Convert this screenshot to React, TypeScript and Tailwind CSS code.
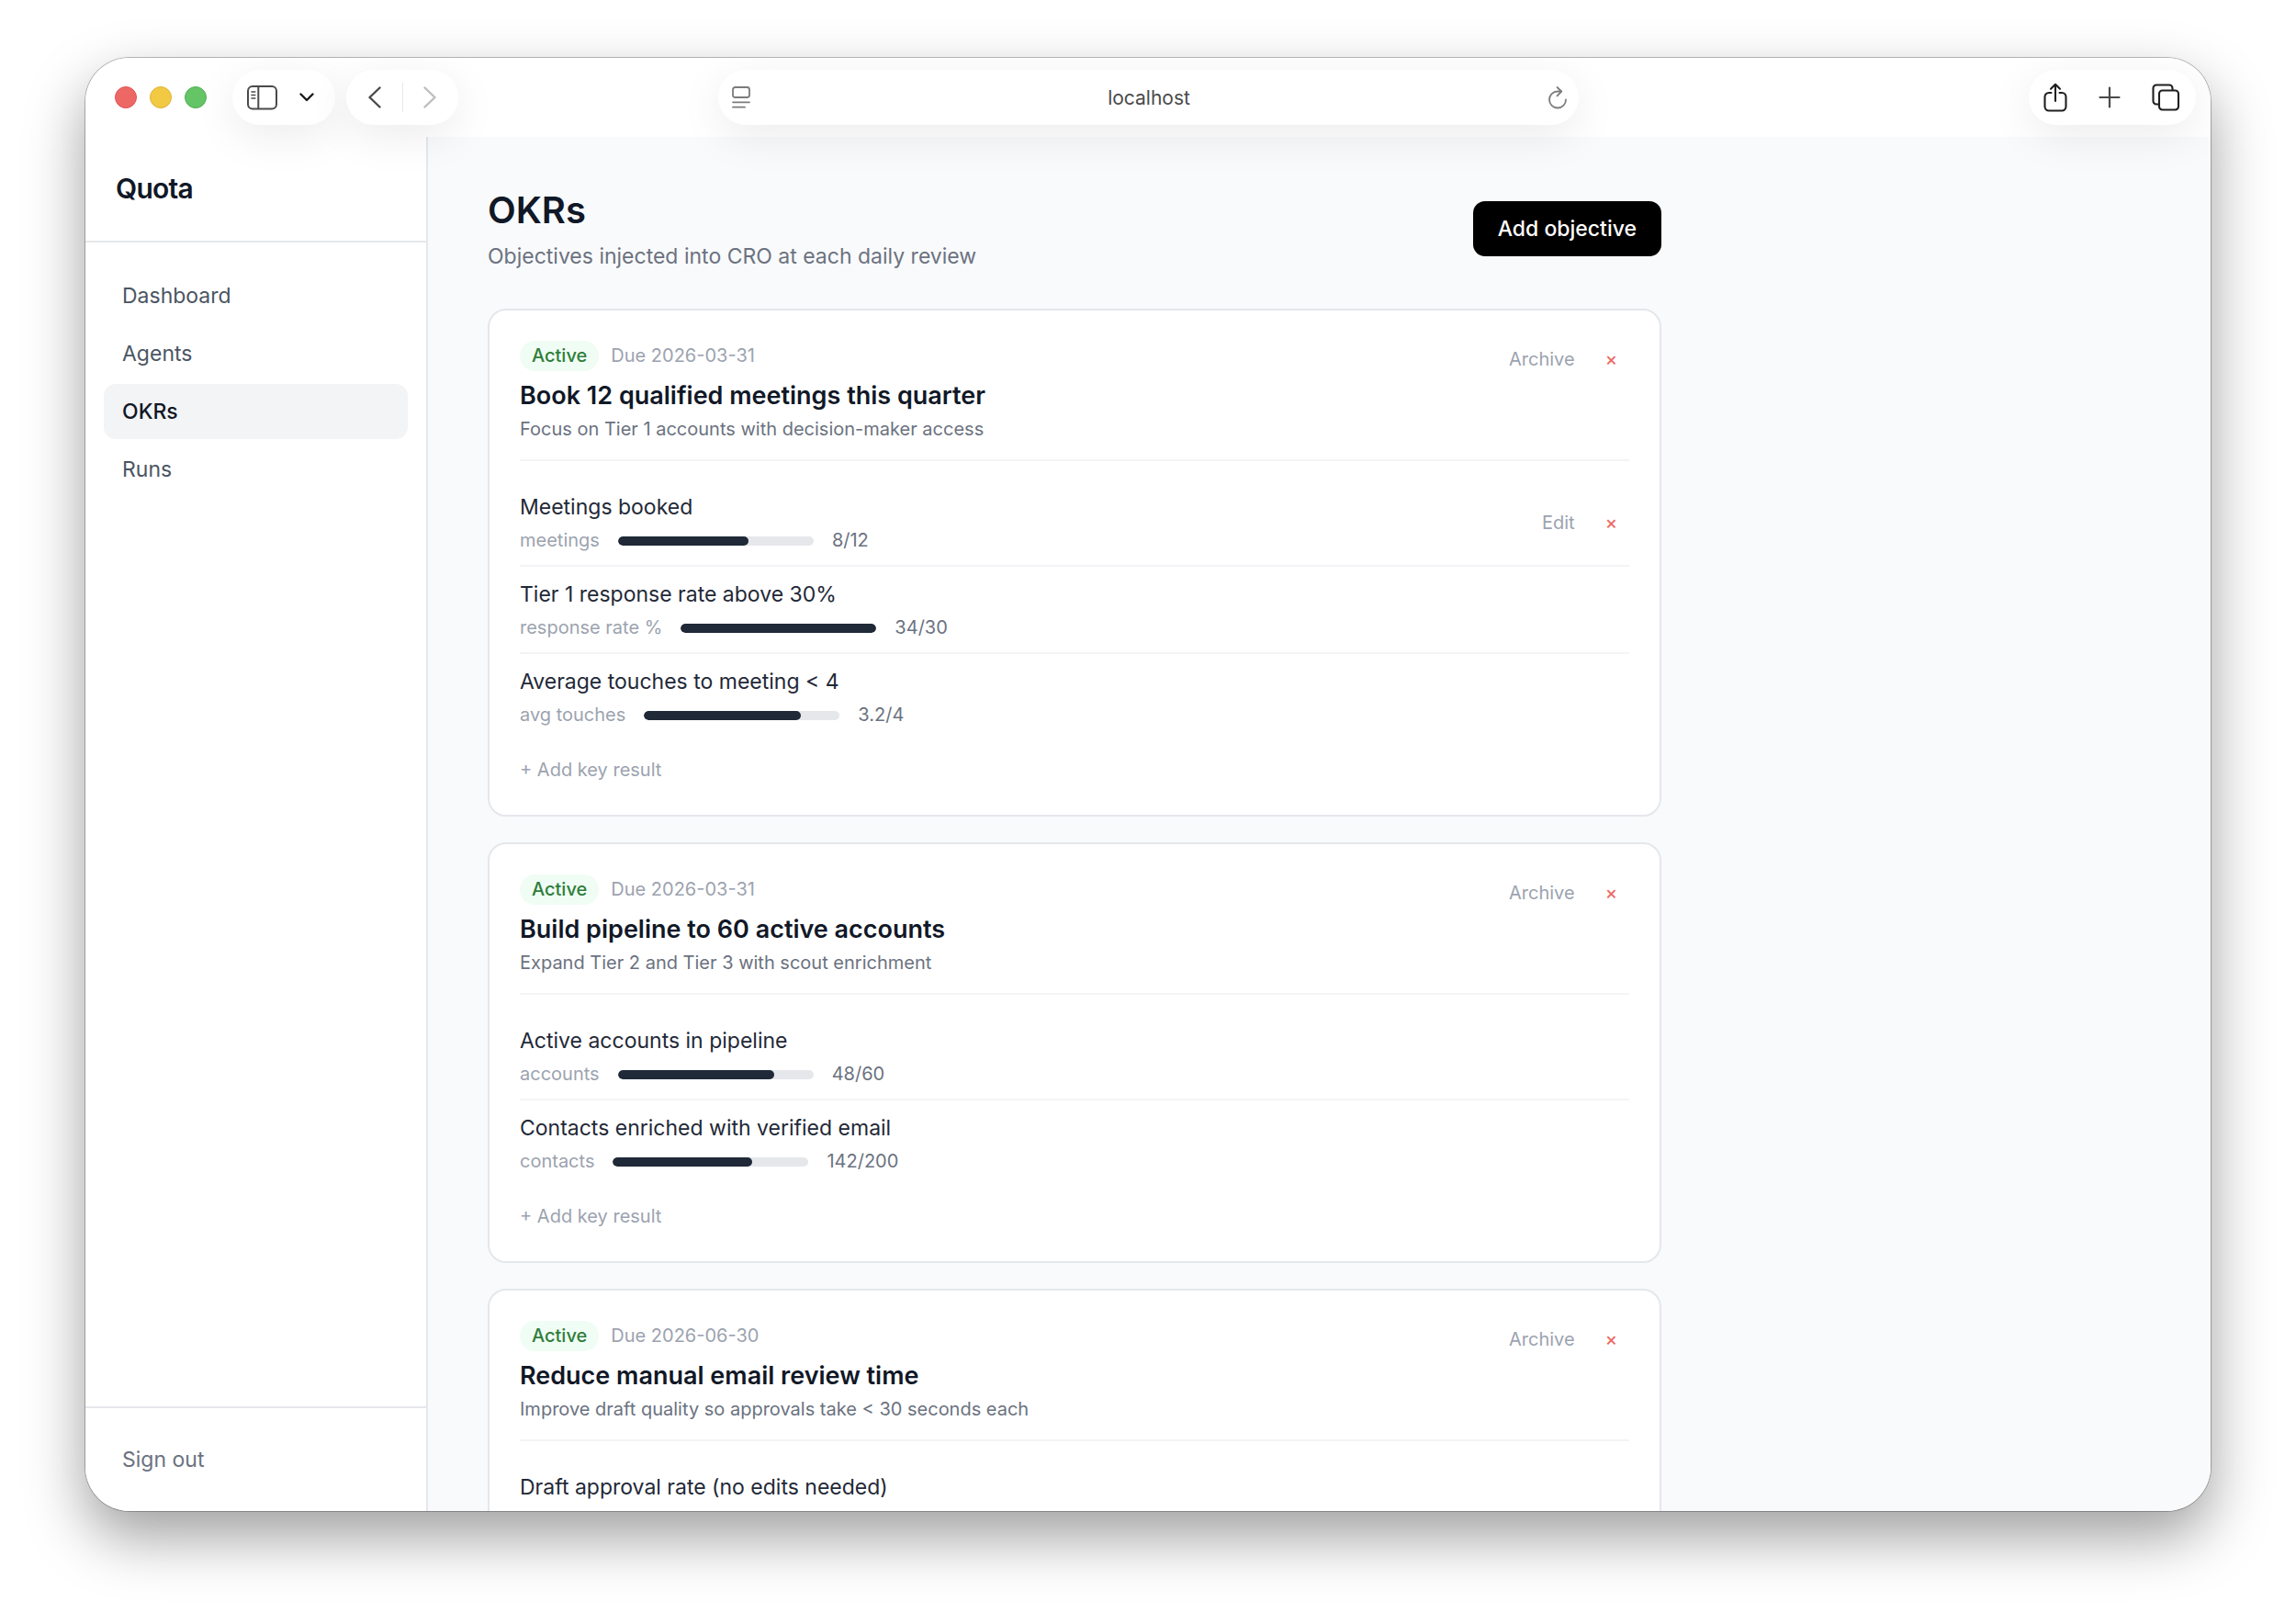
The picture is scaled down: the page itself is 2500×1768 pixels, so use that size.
import { useState } from "react";

interface KeyResult {
  title: string;
  unit: string;
  current: number;
  target: number;
  editable?: boolean;
}

interface Objective {
  title: string;
  description: string;
  due: string;
  keyResults: KeyResult[];
}

const navItems = ["Dashboard", "Agents", "OKRs", "Runs"];

const objectives: Objective[] = [
  {
    title: "Book 12 qualified meetings this quarter",
    description: "Focus on Tier 1 accounts with decision-maker access",
    due: "2026-03-31",
    keyResults: [
      { title: "Meetings booked", unit: "meetings", current: 8, target: 12, editable: true },
      { title: "Tier 1 response rate above 30%", unit: "response rate %", current: 34, target: 30 },
      { title: "Average touches to meeting < 4", unit: "avg touches", current: 3.2, target: 4 },
    ],
  },
  {
    title: "Build pipeline to 60 active accounts",
    description: "Expand Tier 2 and Tier 3 with scout enrichment",
    due: "2026-03-31",
    keyResults: [
      { title: "Active accounts in pipeline", unit: "accounts", current: 48, target: 60 },
      { title: "Contacts enriched with verified email", unit: "contacts", current: 142, target: 200 },
    ],
  },
  {
    title: "Reduce manual email review time",
    description: "Improve draft quality so approvals take < 30 seconds each",
    due: "2026-06-30",
    keyResults: [
      { title: "Draft approval rate (no edits needed)", unit: "approval %", current: 60, target: 80 },
    ],
  },
];

const pill =
  "flex h-[60px] items-center rounded-full bg-white shadow-[0_12px_48px_rgba(0,0,0,0.08)]";

function BrowserToolbar() {
  const [url, setUrl] = useState("localhost");

  return (
    <header className="relative z-10 grid h-[86px] shrink-0 grid-cols-[1fr_minmax(0,937px)_1fr] items-center bg-white">
      <div className="flex items-center pl-8">
        <div className="mr-7 flex gap-[14px]">
          <button aria-label="Close" className="size-6 rounded-full border border-[#e05252] bg-[#ed6765]" />
          <button aria-label="Minimize" className="size-6 rounded-full border border-[#dfb235] bg-[#f2c943]" />
          <button aria-label="Zoom" className="size-6 rounded-full border border-[#4fb052] bg-[#65c466]" />
        </div>
        <div className={`${pill} mr-3 w-[112px] gap-6 pl-4`}>
          <button aria-label="Sidebar">
            <svg width="33" height="27" viewBox="0 0 33 27" fill="none" stroke="#4a4a4a" strokeWidth="2">
              <rect x="1" y="1" width="31" height="24.5" rx="5" />
              <path d="M12.3 1v24.5" />
              <path d="M5 7h3.8M5 10.5h3.8M5 14h3.8" strokeWidth="1.6" strokeLinecap="round" />
            </svg>
          </button>
          <button aria-label="Tab groups">
            <svg width="16" height="10" viewBox="0 0 16 10" fill="none" stroke="#1a1a1a" strokeWidth="2.4" strokeLinecap="round" strokeLinejoin="round">
              <path d="M1.5 1.5L8 8l6.5-6.5" />
            </svg>
          </button>
        </div>
        <div className={`${pill} w-[122px] justify-between px-6`}>
          <button aria-label="Back">
            <svg width="14" height="24" viewBox="0 0 14 24" fill="none" stroke="#4a4a4a" strokeWidth="2.4" strokeLinecap="round" strokeLinejoin="round">
              <path d="M12.5 1.5L1.5 12l11 10.5" />
            </svg>
          </button>
          <span className="h-8 w-px bg-[#e8e8e8]" />
          <button aria-label="Forward">
            <svg width="14" height="24" viewBox="0 0 14 24" fill="none" stroke="#bdbdbd" strokeWidth="2.4" strokeLinecap="round" strokeLinejoin="round">
              <path d="M1.5 1.5L12.5 12l-11 10.5" />
            </svg>
          </button>
        </div>
      </div>

      <div className={`${pill} pr-3 pl-[14px]`}>
        <button aria-label="Page menu">
          <svg width="22" height="24" viewBox="0 0 22 24" fill="none" stroke="#7b7b7b" strokeWidth="1.8" strokeLinecap="round">
            <rect x="2" y="1" width="18" height="11" rx="2.5" />
            <path d="M2 17.3h18M2 22.7h13" />
          </svg>
        </button>
        <input
          aria-label="Address"
          value={url}
          onChange={(e) => setUrl(e.target.value)}
          className="min-w-0 flex-1 pt-[2px] text-center text-[21px] leading-7 text-[#4a4a4a] outline-none"
        />
        <button aria-label="Reload">
          <svg width="22" height="26" viewBox="0 0 22 26" fill="none" stroke="#7b7b7b" strokeWidth="1.8" strokeLinecap="round" strokeLinejoin="round">
            <path d="M20 15.5A9 9 0 1 1 11 6.500h4" />
            <path d="M10.5 2L15.200 6.500l-4.700 4.800" />
          </svg>
        </button>
      </div>

      <div className="flex justify-end pr-4">
        <div className={`${pill} w-[182px] justify-between px-4`}>
          <button aria-label="Share">
            <svg width="26" height="32" viewBox="0 0 26 32" fill="none" stroke="#1f1f1f" strokeWidth="2.1" strokeLinecap="round" strokeLinejoin="round">
              <path d="M8.5 11H6a4.5 4.5 0 0 0-4.5 4.5v10.500A4.5 4.5 0 0 0 6 30.500h14a4.5 4.5 0 0 0 4.5-4.5V15.500A4.5 4.5 0 0 0 20 11h-2.5" />
              <path d="M13 20V2M8 6.8L13 1.8l5 5" />
            </svg>
          </button>
          <button aria-label="New tab">
            <svg width="24" height="24" viewBox="0 0 24 24" fill="none" stroke="#4a4a4a" strokeWidth="2.2" strokeLinecap="round">
              <path d="M12 1.5v21M1.5 12h21" />
            </svg>
          </button>
          <button aria-label="Tab overview">
            <svg width="32" height="30" viewBox="0 0 32 30" fill="none" stroke="#1f1f1f" strokeWidth="2.1" strokeLinejoin="round">
              <rect x="8" y="7.5" width="21" height="21" rx="3.5" />
              <path d="M8 22.5H5A3.5 3.5 0 0 1 1.5 19V5A3.5 3.5 0 0 1 5 1.5h14A3.5 3.5 0 0 1 22.5 5v2.5" />
            </svg>
          </button>
        </div>
      </div>
    </header>
  );
}

function Sidebar() {
  const [active, setActive] = useState("OKRs");

  return (
    <aside className="flex w-[373px] shrink-0 flex-col border-r-2 border-[#e5e7eb] bg-white">
      <div className="border-b-2 border-[#e5e7eb] p-[33px]">
        <div className="text-[30px] leading-[47px] font-semibold tracking-tight text-[#111827]">Quota</div>
      </div>
      <nav className="flex flex-1 flex-col gap-[3px] px-5 py-7">
        {navItems.map((item) => (
          <a
            key={item}
            href={`#${item.toLowerCase()}`}
            onClick={() => setActive(item)}
            className={`rounded-[13px] px-5 py-[13px] text-[23px] leading-[34px] ${
              active === item ? "bg-[#f3f4f6] font-medium text-[#111827]" : "text-[#4b5563]"
            }`}
          >
            {item}
          </a>
        ))}
      </nav>
      <div className="border-t-2 border-[#e5e7eb] px-5 py-[26px]">
        <button className="w-full px-5 py-[13px] text-left text-[23px] leading-[34px] text-[#6b7280]">
          Sign out
        </button>
      </div>
    </aside>
  );
}

function RowActions({ label }: { label: string }) {
  return (
    <div className="flex shrink-0 gap-[7px] text-[20px] leading-[26px]">
      <button className="px-[13px] py-[7px] text-[#9ca3af]">{label}</button>
      <button aria-label="Delete" className="px-[13px] py-[7px] font-medium text-[#ec6a65]">
        ×
      </button>
    </div>
  );
}

function KeyResultRow({ kr }: { kr: KeyResult }) {
  const percent = Math.min(100, (kr.current / kr.target) * 100);

  return (
    <li className="flex items-center justify-between border-b-2 border-[#f3f4f6] py-[13px] last:border-b-0">
      <div>
        <p className="text-[23px] leading-[35px] text-[#1f2937]">{kr.title}</p>
        <div className="mt-[5px] flex items-center gap-5 text-[20px] leading-[27px]">
          <span className="text-[#9ca3af]">{kr.unit}</span>
          <div className="h-[10px] w-[213px] overflow-hidden rounded-full bg-[#e5e7eb]">
            <div className="h-full rounded-full bg-[#1f2937]" style={{ width: `${percent}%` }} />
          </div>
          <span className="text-[#6b7280]">
            {kr.current}/{kr.target}
          </span>
        </div>
      </div>
      {kr.editable && <RowActions label="Edit" />}
    </li>
  );
}

function ObjectiveCard({ objective }: { objective: Objective }) {
  return (
    <section className="rounded-[20px] border-2 border-[#e5e7eb] bg-white p-[33px]">
      <div className="flex items-start justify-between border-b-2 border-[#f3f4f6] pb-[19px]">
        <div>
          <div className="flex items-center gap-[13px] text-[20px] leading-[27px]">
            <span className="rounded-full bg-[#f0fdf4] px-[13px] py-[3px] font-medium text-[#2f7d3b]">Active</span>
            <span className="text-[#9ca3af]">Due {objective.due}</span>
          </div>
          <h2 className="mt-[7px] text-[27px] leading-[40px] font-semibold text-[#111827]">{objective.title}</h2>
          <p className="mt-[3px] text-[20px] leading-[27px] text-[#6b7280]">{objective.description}</p>
        </div>
        <RowActions label="Archive" />
      </div>
      <ul className="pt-5">
        {objective.keyResults.map((kr) => (
          <KeyResultRow key={kr.title} kr={kr} />
        ))}
      </ul>
      <button className="mt-[18px] block text-[20px] leading-[31px] text-[#9ca3af]">+ Add key result</button>
    </section>
  );
}

export default function App() {
  return (
    <div className="flex h-screen flex-col overflow-hidden bg-white px-[93px] pt-[63px] pb-[123px] font-['Inter',sans-serif]">
      <div className="flex min-h-0 flex-1 flex-col overflow-hidden rounded-[48px] bg-white shadow-[0_0_0_1px_rgba(0,0,0,0.25),0_28px_64px_rgba(0,0,0,0.38)]">
        <BrowserToolbar />
        <div className="flex min-h-0 flex-1">
          <Sidebar />
          <main className="min-w-0 flex-1 overflow-hidden bg-[#f9fafb] px-[65px] py-[53px]">
            <div className="max-w-[1278px]">
              <div className="mb-10 flex items-center justify-between">
                <div>
                  <h1 className="text-[40px] leading-[53px] font-semibold text-[#111827]">OKRs</h1>
                  <p className="mt-[7px] text-[23px] leading-[34px] text-[#6b7280]">
                    Objectives injected into CRO at each daily review
                  </p>
                </div>
                <button className="rounded-[13px] bg-black px-[27px] py-[13px] text-[23px] leading-[34px] font-medium text-white">
                  Add objective
                </button>
              </div>
              <div className="flex flex-col gap-7">
                {objectives.map((objective) => (
                  <ObjectiveCard key={objective.title} objective={objective} />
                ))}
              </div>
            </div>
          </main>
        </div>
      </div>
    </div>
  );
}
